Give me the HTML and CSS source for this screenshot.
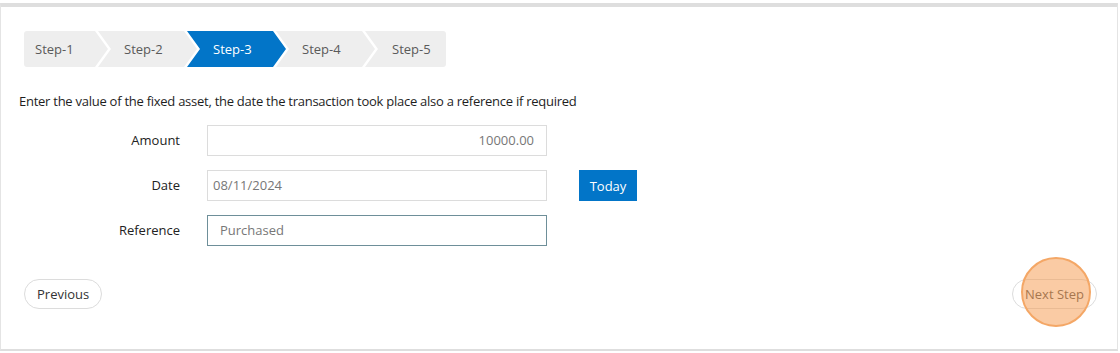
FILE: index.html
```html
<!DOCTYPE html>
<html>
<head>
<meta charset="utf-8">
<link rel="stylesheet" href="styles.css">
</head>
<body>
<div class="card">
  <div class="steps">
    <div class="step first">Step-1</div>
    <div class="step">Step-2</div>
    <div class="step active">Step-3</div>
    <div class="step">Step-4</div>
    <div class="step last">Step-5</div>
  </div>
  <p class="intro">Enter the value of the fixed asset, the date the transaction took place also a reference if required</p>
  <div class="form">
    <label class="label">Amount</label>
    <div class="input amount">10000.00</div>
    <div></div>
    <label class="label">Date</label>
    <div class="input date">08/11/2024</div>
    <button class="today">Today</button>
    <label class="label">Reference</label>
    <div class="input ref">Purchased</div>
    <div></div>
  </div>
  <div class="actions">
    <button class="pill">Previous</button>
    <div class="next-wrap">
      <button class="pill next">Next Step</button>
      <span class="highlight"></span>
    </div>
  </div>
</div>
</body>
</html>
```
FILE: styles.css
```css
html, body {
  margin: 0;
  padding: 0;
  background: #fff;
  font-family: "Open Sans", "Liberation Sans", sans-serif;
  font-size: 13px;
  color: #222;
}
.card {
  margin-top: 3px;
  width: 1118px;
  height: 348px;
  box-sizing: border-box;
  border-top: 4px solid #dedede;
  border-left: 1px solid #e4e4e4;
  border-right: 1px solid #e4e4e4;
  border-bottom: 2px solid #dedede;
  padding: 24px 20px 0 18px;
}
.steps {
  display: flex;
  margin-left: 5px;
  height: 36px;
}
.step {
  width: 99px;
  height: 36px;
  box-sizing: border-box;
  padding-left: 26px;
  line-height: 36px;
  background: #eeeeee;
  color: #5a5a5a;
  font-size: 13px;
  margin-left: -10px;
  clip-path: polygon(0 0, calc(100% - 13px) 0, 100% 50%, calc(100% - 13px) 100%, 0 100%, 13px 50%);
}
.step.first {
  width: 84px;
  padding-left: 11px;
  margin-left: 0;
  border-radius: 3px 0 0 3px;
  clip-path: polygon(0 0, calc(100% - 13px) 0, 100% 50%, calc(100% - 13px) 100%, 0 100%);
}
.step.last {
  width: 81px;
  padding-left: 27px;
  border-radius: 0 3px 3px 0;
  clip-path: polygon(0 0, 100% 0, 100% 100%, 0 100%, 13px 50%);
}
.step.active {
  background: #0275c8;
  color: #fff;
}
.intro {
  margin: 25px 0 0 0;
  line-height: 18px;
  color: #1e1e1e;
  letter-spacing: -0.26px;
}
.form {
  display: grid;
  grid-template-columns: 161px 340px 58px;
  column-gap: 27px;
  row-gap: 14px;
  margin-top: 15px;
}
.form > button.today { margin-left: 5px; }
.label {
  text-align: right;
  line-height: 31px;
  color: #222;
}
.input {
  height: 31px;
  box-sizing: border-box;
  border: 1px solid #dcdcdc;
  line-height: 29px;
  color: #777;
  padding: 0 12px;
}
.input.amount { text-align: right; }
.input.date { padding-left: 5px; }
.input.ref { border-color: #6e8f99; }
.today {
  height: 31px;
  width: 58px;
  border: 0;
  background: #0275c8;
  color: #fff;
  font-family: inherit;
  font-size: 13px;
  padding: 0;
}
.actions {
  display: flex;
  justify-content: space-between;
  align-items: center;
  margin-top: 33px;
  padding-left: 5px;
}
.pill {
  height: 30px;
  box-sizing: border-box;
  border: 1px solid #dcdcdc;
  border-radius: 15px;
  background: #fff;
  font-family: inherit;
  font-size: 13px;
  color: #333;
  padding: 0 12px;
}
.next-wrap {
  position: relative;
}
.pill.next {
  width: 85px;
  padding: 0;
  color: #444;
}
.highlight {
  position: absolute;
  left: 9px;
  top: -22px;
  width: 70px;
  height: 70px;
  box-sizing: border-box;
  border-radius: 50%;
  border: 2px solid #f4a766;
  background: rgba(246, 160, 90, 0.55);
}
```
